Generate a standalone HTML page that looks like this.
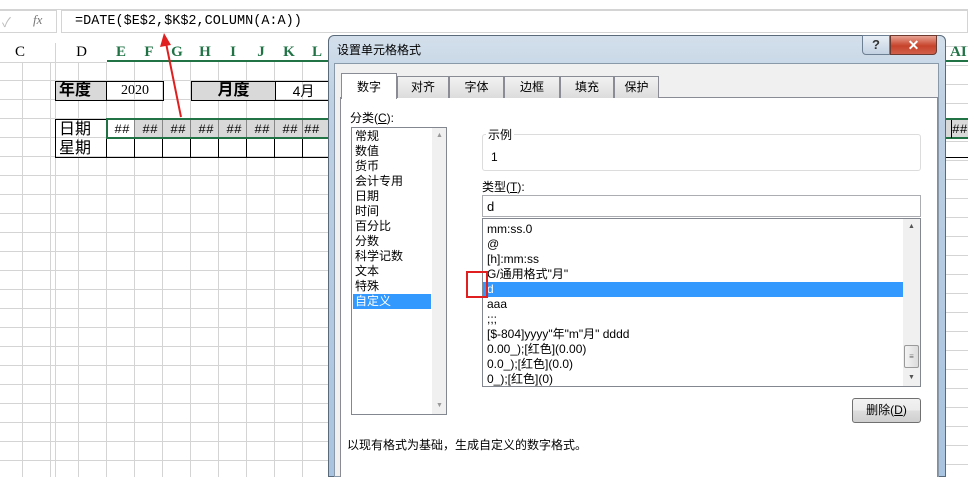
<!DOCTYPE html>
<html><head><meta charset="utf-8"><style>
*{margin:0;padding:0;box-sizing:border-box}
body{width:968px;height:477px;overflow:hidden;background:#fff;position:relative;font-family:"Liberation Sans","Noto Sans CJK SC",sans-serif;font-size:12px;color:#000}
.a{position:absolute}
.grid{left:0;top:62px;width:330px;height:415px;
background-image:linear-gradient(to bottom,transparent 18px,#d4d4d4 18px),linear-gradient(to right,transparent 27px,#d4d4d4 27px);
background-size:100% 19px,28px 100%;background-position:0 0,107px 0}
.mono{font-family:"Liberation Mono","Noto Sans CJK SC",monospace}
.hd{top:43px;height:19px;text-align:center;font-family:"Liberation Serif",serif;font-size:15px;line-height:19px}
.cat div{height:15px;line-height:15px;padding-left:3px;font-size:12px}
.fmt div{height:15px;line-height:15px;padding-left:4px;font-size:12px}
.tab{top:76px;height:22px;border:1px solid #898c95;border-bottom:none;background:linear-gradient(#f2f2f2,#dcdcdc);text-align:center;line-height:20px;font-size:12px}
</style></head><body>
<div class="a" style="left:0;top:9px;width:968px;height:1px;background:#d4d4d4"></div>
<div class="a" style="left:0;top:10px;width:57px;height:23px;border:1px solid #d4d4d4;border-left:none"></div>
<div class="a" style="left:2px;top:12px;color:#bbb;font-size:13px">✓</div>
<div class="a" style="left:33px;top:12px;color:#777;font-style:italic;font-family:'Liberation Serif',serif;font-size:13px">fx</div>
<div class="a" style="left:61px;top:10px;width:907px;height:23px;border:1px solid #d4d4d4"></div>
<div class="a mono" style="left:75px;top:14px;font-size:13.5px">=DATE($E$2,$K$2,COLUMN(A:A))</div>
<div class="a" style="left:0;top:62px;width:107px;height:1px;background:#d4d4d4"></div>
<div class="a hd" style="left:0;width:40px">C</div>
<div class="a" style="left:55px;top:43px;width:1px;height:19px;background:#d4d4d4"></div>
<div class="a hd" style="left:56px;width:51px">D</div>
<div class="a" style="left:107px;top:60px;width:223px;height:2px;background:#217346"></div>
<div class="a hd" style="left:107px;width:28px;color:#217346;font-weight:bold">E</div>
<div class="a hd" style="left:135px;width:28px;color:#217346;font-weight:bold">F</div>
<div class="a hd" style="left:163px;width:28px;color:#217346;font-weight:bold">G</div>
<div class="a hd" style="left:191px;width:28px;color:#217346;font-weight:bold">H</div>
<div class="a hd" style="left:219px;width:28px;color:#217346;font-weight:bold">I</div>
<div class="a hd" style="left:247px;width:28px;color:#217346;font-weight:bold">J</div>
<div class="a hd" style="left:275px;width:28px;color:#217346;font-weight:bold">K</div>
<div class="a hd" style="left:303px;width:28px;color:#217346;font-weight:bold">L</div>
<div class="a grid"></div>
<div class="a" style="left:0;top:62px;width:107px;height:415px;background-image:linear-gradient(to bottom,transparent 18px,#d4d4d4 18px);background-size:100% 19px"></div>
<div class="a" style="left:55px;top:62px;width:1px;height:415px;background:#d4d4d4"></div>
<div class="a" style="left:55px;top:81px;width:52px;height:20px;background:#d9d9d9;border:1px solid #000;font-weight:bold;font-size:16px;line-height:18px;padding-left:3px">年度</div>
<div class="a" style="left:106px;top:81px;width:58px;height:20px;border:1px solid #000;text-align:center;line-height:18px;font-size:14px;font-family:'Liberation Serif',serif">2020</div>
<div class="a" style="left:191px;top:81px;width:85px;height:20px;background:#d9d9d9;border:1px solid #000;font-weight:bold;font-size:16px;line-height:18px;text-align:center">月度</div>
<div class="a" style="left:275px;top:81px;width:56px;height:20px;border:1px solid #000;border-right:none;text-align:center;line-height:18px;font-size:14px">4月</div>
<div class="a" style="left:55px;top:119px;width:52px;height:39px;border:1px solid #000;font-size:16px;line-height:19px;padding-left:3px">日期<br>星期</div>
<div class="a" style="left:106px;top:138px;width:224px;height:20px;border:1px solid #000;border-right:none;background-image:linear-gradient(to right,transparent 27px,#000 27px);background-size:28px 100%;background-position:0 0"></div>
<div class="a" style="left:107px;top:120px;width:223px;height:18px;background:#d9d9d9"></div>
<div class="a" style="left:107px;top:120px;width:28px;height:18px;background:#fff"></div>
<div class="a" style="left:107px;top:120px;width:223px;height:18px;background-image:linear-gradient(to right,transparent 27px,#888 27px);background-size:28px 100%"></div>
<div class="a" style="left:106px;top:118px;width:224px;height:21px;border:2px solid #217346;border-right:none"></div>
<div class="a mono" style="left:108px;top:122px;width:222px;font-size:13px;white-space:nowrap;letter-spacing:0">
<span style="display:inline-block;width:28px;text-align:center">##</span><span style="display:inline-block;width:28px;text-align:center">##</span><span style="display:inline-block;width:28px;text-align:center">##</span><span style="display:inline-block;width:28px;text-align:center">##</span><span style="display:inline-block;width:28px;text-align:center">##</span><span style="display:inline-block;width:28px;text-align:center">##</span><span style="display:inline-block;width:28px;text-align:center">##</span><span style="display:inline-block;width:24px">##</span></div>
<svg class="a" style="left:150px;top:25px" width="50" height="100"><line x1="31" y1="92" x2="16" y2="18" stroke="#e02020" stroke-width="2"/><polygon points="14,8 10,22 21,20" fill="#e02020"/></svg>
<div class="a" style="left:946px;top:42px;width:22px;height:435px;background-image:linear-gradient(to bottom,transparent 18px,#d4d4d4 18px);background-size:100% 19px;background-position:0 5px"></div>
<div class="a hd" style="left:950px;color:#217346;font-weight:bold;text-align:left">AI</div>
<div class="a" style="left:946px;top:60px;width:22px;height:2px;background:#217346"></div>
<div class="a" style="left:946px;top:118px;width:22px;height:21px;border-top:2px solid #217346;border-bottom:2px solid #217346;background:#d9d9d9"></div>
<div class="a mono" style="left:952px;top:122px;font-size:13px">##</div>
<div class="a" style="left:951px;top:120px;width:1px;height:18px;background:#000"></div>
<div class="a" style="left:946px;top:157px;width:22px;height:1px;background:#000"></div>
<div class="a" style="left:328px;top:35px;width:618px;height:442px;border:1px solid #5a6a7a;border-radius:6px 6px 0 0;background:linear-gradient(#d3dfeb,#bfd1e3 60px,#a9c4e0)"></div>
<div class="a" style="left:337px;top:41px;font-size:12px">设置单元格格式</div>
<div class="a" style="left:862px;top:35px;width:28px;height:20px;border:1px solid #6d7f92;border-radius:0 0 0 4px;background:linear-gradient(#e8eef5,#c3d2e2);text-align:center;color:#333;font-weight:bold;font-size:13px;line-height:18px">?</div>
<div class="a" style="left:890px;top:35px;width:47px;height:20px;border:1px solid #6d3a30;border-radius:0 0 4px 0;background:linear-gradient(#e8a393,#c7432b 55%,#d0604a);text-align:center;color:#fff;font-weight:bold;font-size:14px;line-height:18px">✕</div>
<div class="a" style="left:334px;top:63px;width:605px;height:414px;background:#f0f0f0;border:1px solid #8a99aa"></div>
<div class="a" style="left:340px;top:97px;width:598px;height:380px;border:1px solid #898c95;background:#fff;border-bottom:none"></div>
<div class="a tab" style="left:397px;width:52px">对齐</div>
<div class="a tab" style="left:449px;width:55px">字体</div>
<div class="a tab" style="left:504px;width:56px">边框</div>
<div class="a tab" style="left:560px;width:54px">填充</div>
<div class="a tab" style="left:614px;width:45px">保护</div>
<div class="a" style="left:341px;top:73px;width:56px;height:26px;border:1px solid #898c95;border-bottom:none;background:#fff;text-align:center;line-height:26px">数字</div>
<div class="a" style="left:350px;top:109px">分类(<u>C</u>):</div>
<div class="a cat" style="left:351px;top:127px;width:96px;height:288px;border:1px solid #828790;background:#fff;padding-top:1px">
<div>常规</div><div>数值</div><div>货币</div><div>会计专用</div><div>日期</div><div>时间</div><div>百分比</div><div>分数</div><div>科学记数</div><div>文本</div><div>特殊</div><div style="background:#3399ff;color:#fff;width:78px;margin-left:1px;padding-left:2px">自定义</div>
</div>
<div class="a" style="left:432px;top:128px;width:14px;height:286px;background:#f0f0f0"></div>
<div class="a" style="left:436px;top:132px;font-size:7px;color:#999">▲</div>
<div class="a" style="left:436px;top:402px;font-size:7px;color:#999">▼</div>
<div class="a" style="left:482px;top:134px;width:439px;height:37px;border:1px solid #dcdcdc;border-radius:3px"></div>
<div class="a" style="left:486px;top:126px;background:#fff;padding:0 2px">示例</div>
<div class="a" style="left:491px;top:150px">1</div>
<div class="a" style="left:482px;top:178px">类型(<u>T</u>):</div>
<div class="a" style="left:482px;top:195px;width:439px;height:22px;border:1px solid #abadb3;background:#fff;padding:3px 4px;font-size:13px">d</div>
<div class="a fmt" style="left:482px;top:218px;width:439px;height:169px;border:1px solid #828790;background:#fff;padding-top:3px">
<div>mm:ss.0</div><div>@</div><div>[h]:mm:ss</div><div>G/通用格式"月"</div><div style="background:#3399ff;color:#fff;width:420px">d</div><div>aaa</div><div>;;;</div><div>[$-804]yyyy"年"m"月" dddd</div><div>0.00_);[红色](0.00)</div><div>0.0_);[红色](0.0)</div><div>0_);[红色](0)</div>
</div>
<div class="a" style="left:903px;top:219px;width:17px;height:167px;background:#f0f0f0"></div>
<div class="a" style="left:908px;top:223px;font-size:7px;color:#555">▲</div>
<div class="a" style="left:908px;top:374px;font-size:7px;color:#555">▼</div>
<div class="a" style="left:904px;top:345px;width:15px;height:23px;border:1px solid #9a9a9a;border-radius:2px;background:linear-gradient(to right,#f4f4f4,#dcdcdc);font-size:8px;text-align:center;line-height:22px;color:#666">≡</div>
<div class="a" style="left:466px;top:271px;width:22px;height:27px;border:2px solid #e02020"></div>
<div class="a" style="left:852px;top:398px;width:69px;height:25px;border:1px solid #707070;border-radius:3px;background:linear-gradient(#f2f2f2,#ebebeb 50%,#dddddd 51%,#cfcfcf);text-align:center;line-height:23px">删除(<u>D</u>)</div>
<div class="a" style="left:347px;top:436px">以现有格式为基础，生成自定义的数字格式。</div>
</body></html>
